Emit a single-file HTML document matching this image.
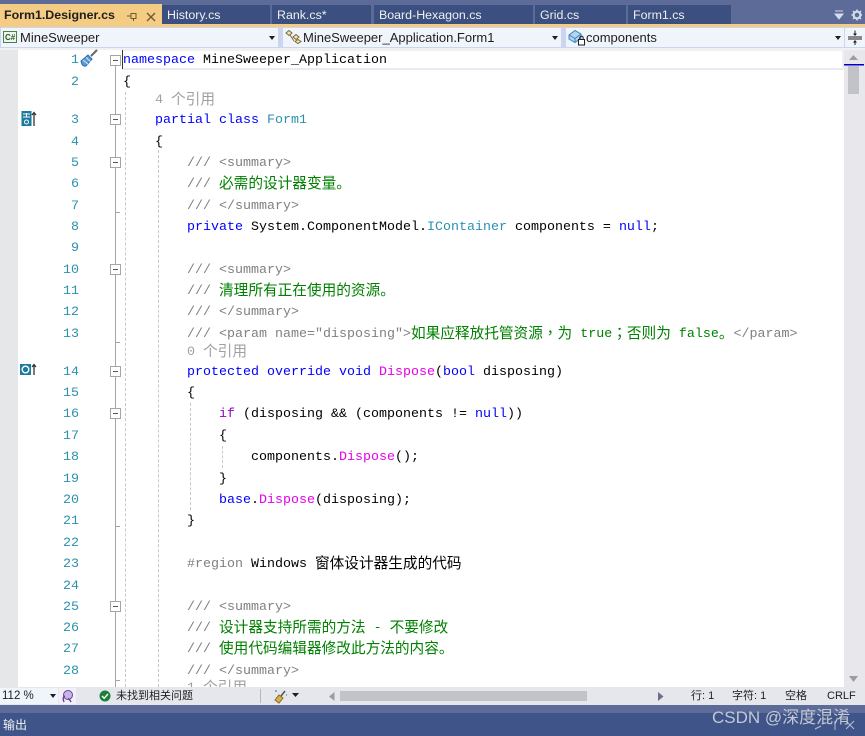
<!DOCTYPE html>
<html><head><meta charset="utf-8">
<style>
html,body{margin:0;padding:0}
body{width:865px;height:736px;position:relative;overflow:hidden;background:#fff;font-family:"Liberation Sans","Noto Sans CJK SC",sans-serif}
.a{position:absolute}
.tab{position:absolute;top:5px;height:19px;background:#3b4f81;color:#f0f0f0;font-size:12.4px;line-height:20px;padding-left:5px;box-sizing:border-box}
.dd{position:absolute;top:28px;height:19px;background:#f0f4fb;font-size:13px;line-height:19px;color:#1e1e1e;box-sizing:border-box}
.dd i{position:absolute;right:3px;top:8px;border-left:3px solid transparent;border-right:3px solid transparent;border-top:4px solid #1e1e1e}
.l{position:absolute;height:20px;line-height:20px;margin-top:2px;white-space:pre;font-family:"Liberation Mono","Noto Sans CJK SC",monospace;font-size:13.33px;color:#000}
.l u{text-decoration:none;font-family:"Noto Sans CJK SC",sans-serif;font-size:14.67px;line-height:0;position:relative;top:1px}
.l u.tc{font-family:"Noto Sans CJK TC",sans-serif}
.n{position:absolute;width:36px;left:43px;margin-top:2px;text-align:right;height:20px;line-height:20px;font-family:"Liberation Mono",monospace;font-size:13.33px;color:#2b91af}
.k{color:#0000ff}.c{color:#008000}.d{color:#808080}.t{color:#2b91af}.m{color:#e800e8}.p{color:#8f08c4}.r{color:#a0a0a0}
.b{position:absolute;left:110px;width:9px;height:9px;border:1px solid #a5a5a5;background:#fff;box-sizing:content-box}
.b:after{content:"";position:absolute;left:2px;top:4px;width:5px;height:1px;background:#555}
.tk{position:absolute;left:115px;width:5px;height:1px;background:#a5a5a5}
.g{position:absolute;width:0;border-left:1px dashed #c8c8c8}
.st{position:absolute;top:688px;height:17px;line-height:17px;font-size:11px;color:#1e1e1e;white-space:nowrap}
</style></head><body>
<div class="a" style="left:0;top:0;width:865px;height:27px;background:#5d6b99"></div>
<div class="a" style="left:0;top:4px;width:162px;height:23px;background:#f5cc84"></div>
<div class="a" style="left:0;top:24px;width:865px;height:3px;background:#f5cc84"></div>
<div class="a" style="left:4px;top:5px;font-size:12.4px;font-weight:bold;line-height:21px;color:#1e1e1e">Form1.Designer.cs</div>
<svg class="a" style="left:126px;top:10px" width="34" height="12" viewBox="0 0 34 12"><path d="M1 6H5M5 3.5V8.5H10V3.5ZM7.5 8.5V11" fill="none" stroke="#6b5a35" stroke-width="1"/><path d="M21 3L29 11M29 3L21 11" stroke="#6b5a35" stroke-width="1.4"/></svg>
<div class="tab" style="left:162px;width:108px">History.cs</div>
<div class="tab" style="left:272px;width:99px">Rank.cs*</div>
<div class="tab" style="left:374px;width:159px">Board-Hexagon.cs</div>
<div class="tab" style="left:535px;width:91px">Grid.cs</div>
<div class="tab" style="left:628px;width:103px">Form1.cs</div>
<svg class="a" style="left:834px;top:9px" width="28" height="12" viewBox="0 0 28 12"><path d="M1 2H9M1 5H9L5 10Z" fill="#d8dce8" stroke="#d8dce8" stroke-width="1"/><circle cx="23" cy="6" r="3.4" fill="none" stroke="#d8dce8" stroke-width="2.2"/><path d="M23 0.5V2M23 10V11.5M17.5 6H19M27 6H28.5M19 2L20 3M26 9L27 10M27 2L26 3M20 9L19 10" stroke="#d8dce8" stroke-width="1.5"/></svg>

<div class="a" style="left:0;top:27px;width:865px;height:23px;background:#ccd5f0"></div>
<div class="a" style="left:0;top:48px;width:865px;height:2px;background:#f1f1f4"></div>
<div class="dd" style="left:1px;width:277px;padding-left:19px">MineSweeper<i></i></div>
<svg class="a" style="left:3px;top:31px" width="14" height="12" viewBox="0 0 14 12"><rect x=".5" y=".5" width="13" height="11" fill="#eef5ee" stroke="#4f7d4f"/><text x="2" y="9" font-family="Liberation Sans" font-size="8" font-weight="bold" fill="#1f5f1f">C#</text></svg>
<div class="dd" style="left:283px;width:278px;padding-left:20px">MineSweeper_Application.Form1<i></i></div>
<svg class="a" style="left:285px;top:29px" width="18" height="16" viewBox="0 0 18 16"><path d="M1 4L4 1.5L7 4L4 6.5ZM8 8L11 5.5L14 8L11 10.5ZM10 12.5L13 10.5L16 12.5L13 14.5Z" fill="#f5e3b5" stroke="#7a6a3e"/><path d="M5 6L9 12" stroke="#7a6a3e"/></svg>
<div class="dd" style="left:566px;width:278px;padding-left:20px">components<i></i></div>
<svg class="a" style="left:568px;top:29px" width="18" height="17" viewBox="0 0 18 17"><path d="M1 6L7 1.5L13 5V9L7 13.5L1 10Z" fill="#b8d4f0" stroke="#3a84c8"/><path d="M1 6L7 9.5L13 5M7 9.5V13.5" fill="none" stroke="#3a84c8"/><rect x="10.5" y="10.5" width="6" height="5.5" fill="#fff" stroke="#1e1e1e"/><path d="M11.8 10.5V8.8A1.7 1.7 0 0 1 15.2 8.8V10.5" fill="none" stroke="#1e1e1e"/></svg>
<svg class="a" style="left:845px;top:28px" width="20" height="19" viewBox="0 0 20 19"><rect width="20" height="19" fill="#f0f4fb"/><path d="M3 9H17M3 11H17" stroke="#1e1e1e"/><path d="M10 2.500V7M10 13V17" stroke="#1e1e1e"/><path d="M8 5.500L10 8L12 5.500ZM8 14.500L10 12L12 14.500Z" fill="#1e1e1e"/></svg>

<!-- editor -->
<div class="a" style="left:0;top:50px;width:18px;height:637px;background:#e6e7e8"></div>
<div class="a" style="left:122px;top:50px;width:722px;height:20px;border-top:1px solid #f0f0f0;border-bottom:2px solid #eaeaf2;border-right:2px solid #f0f0f2;box-sizing:border-box"></div>
<div class="a" style="left:122px;top:50px;width:1px;height:19px;background:#333"></div>
<div class="a" style="left:844px;top:50px;width:21px;height:637px;background:#e8e8ec"></div>
<svg class="a" style="left:844px;top:52px" width="21" height="14" viewBox="0 0 21 14"><path d="M5 8L9.5 3L14 8Z" fill="#9a9ca6"/><rect x="0" y="12" width="20" height="1.5" fill="#0000c8"/></svg>
<div class="a" style="left:848px;top:66px;width:11px;height:28px;background:#c2c3c9"></div>
<svg class="a" style="left:844px;top:674px" width="21" height="10" viewBox="0 0 21 10"><path d="M5 2L9.5 8L14 2Z" fill="#9a9ca6"/></svg>

<!-- outlining -->
<div class="a" style="left:115px;top:66px;width:1px;height:621px;background:#a5a5a5"></div>
<div class="b" style="top:55px"></div><div class="b" style="top:114px"></div><div class="b" style="top:157px"></div><div class="b" style="top:264px"></div><div class="b" style="top:366px"></div><div class="b" style="top:408px"></div><div class="b" style="top:601px"></div>
<div class="tk" style="top:212px"></div><div class="tk" style="top:342px"></div><div class="tk" style="top:526px"></div><div class="tk" style="top:680px"></div>
<div class="g" style="left:125px;top:92px;height:595px"></div>
<div class="g" style="left:158px;top:150px;height:537px"></div>
<div class="g" style="left:190px;top:403px;height:107px"></div>
<div class="g" style="left:222px;top:446px;height:22px"></div>

<!-- line numbers -->
<div class="n" style="top:49px">1</div><div class="n" style="top:71px">2</div><div class="n" style="top:109px">3</div><div class="n" style="top:131px">4</div><div class="n" style="top:152px">5</div><div class="n" style="top:173px">6</div><div class="n" style="top:195px">7</div><div class="n" style="top:216px">8</div><div class="n" style="top:237px">9</div><div class="n" style="top:259px">10</div><div class="n" style="top:280px">11</div><div class="n" style="top:301px">12</div><div class="n" style="top:323px">13</div><div class="n" style="top:361px">14</div><div class="n" style="top:382px">15</div><div class="n" style="top:403px">16</div><div class="n" style="top:425px">17</div><div class="n" style="top:446px">18</div><div class="n" style="top:468px">19</div><div class="n" style="top:489px">20</div><div class="n" style="top:510px">21</div><div class="n" style="top:532px">22</div><div class="n" style="top:553px">23</div><div class="n" style="top:575px">24</div><div class="n" style="top:596px">25</div><div class="n" style="top:617px">26</div><div class="n" style="top:638px">27</div><div class="n" style="top:660px">28</div>

<svg class="a" style="left:79px;top:49px" width="20" height="20" viewBox="0 0 20 20"><path d="M2 12L9 6L13 10L7 17Q3 18 2 12Z" fill="#5b9bd5" stroke="#2e6cab"/><path d="M4 11L10 16M7 8.500L12 13" stroke="#dce9f7"/><path d="M12 7L18 1" stroke="#666" stroke-width="2"/></svg>
<svg class="a" style="left:20px;top:111px" width="18" height="16" viewBox="0 0 18 16"><rect x="1.500" y="0" width="10" height="15" fill="#1c7a9c"/><path d="M3 3H10M6.500 2V6M3 6H10" stroke="#fff"/><circle cx="6.500" cy="11" r="2" fill="none" stroke="#fff"/><path d="M14 15V2M12 4L14 1.500L16 4" fill="none" stroke="#333" stroke-width="1.300"/></svg>
<svg class="a" style="left:20px;top:363px" width="18" height="14" viewBox="0 0 18 14"><rect x="0" y="1" width="11" height="11" fill="#1c7a9c"/><circle cx="5.500" cy="6.500" r="3.300" fill="none" stroke="#fff" stroke-width="1.400"/><path d="M14 12V2M12 4L14 1.500L16 4" fill="none" stroke="#333" stroke-width="1.300"/></svg>

<!-- code -->
<div class="l" style="left:123px;top:49px"><span class="k">namespace</span> MineSweeper_Application</div>
<div class="l" style="left:123px;top:71px">{</div>
<div class="l r" style="left:155px;top:89px">4 <u>个引用</u></div>
<div class="l" style="left:155px;top:109px"><span class="k">partial</span> <span class="k">class</span> <span class="t">Form1</span></div>
<div class="l" style="left:155px;top:131px">{</div>
<div class="l d" style="left:187px;top:152px">/// &lt;summary&gt;</div>
<div class="l" style="left:187px;top:173px"><span class="d">///</span> <u class="c">必需的设计器变量。</u></div>
<div class="l d" style="left:187px;top:195px">/// &lt;/summary&gt;</div>
<div class="l" style="left:187px;top:216px"><span class="k">private</span> System.ComponentModel.<span class="t">IContainer</span> components = <span class="k">null</span>;</div>
<div class="l d" style="left:187px;top:259px">/// &lt;summary&gt;</div>
<div class="l" style="left:187px;top:280px"><span class="d">///</span> <u class="c">清理所有正在使用的资源。</u></div>
<div class="l d" style="left:187px;top:301px">/// &lt;/summary&gt;</div>
<div class="l" style="left:187px;top:323px"><span class="d">/// &lt;param name="disposing"&gt;</span><span class="c"><u>如果应释放托管资源</u><u class="tc">，</u><u>为</u> true<u class="tc">；</u><u>否则为</u> false<u>。</u></span><span class="d">&lt;/param&gt;</span></div>
<div class="l r" style="left:187px;top:341px">0 <u>个引用</u></div>
<div class="l" style="left:187px;top:361px"><span class="k">protected</span> <span class="k">override</span> <span class="k">void</span> <span class="m">Dispose</span>(<span class="k">bool</span> disposing)</div>
<div class="l" style="left:187px;top:382px">{</div>
<div class="l" style="left:219px;top:403px"><span class="p">if</span> (disposing &amp;&amp; (components != <span class="k">null</span>))</div>
<div class="l" style="left:219px;top:425px">{</div>
<div class="l" style="left:251px;top:446px">components.<span class="m">Dispose</span>();</div>
<div class="l" style="left:219px;top:468px">}</div>
<div class="l" style="left:219px;top:489px"><span class="k">base</span>.<span class="m">Dispose</span>(disposing);</div>
<div class="l" style="left:187px;top:510px">}</div>
<div class="l" style="left:187px;top:553px"><span class="d">#region</span> Windows <u>窗体设计器生成的代码</u></div>
<div class="l d" style="left:187px;top:596px">/// &lt;summary&gt;</div>
<div class="l" style="left:187px;top:617px"><span class="d">///</span> <span class="c"><u>设计器支持所需的方法</u> - <u>不要修改</u></span></div>
<div class="l" style="left:187px;top:638px"><span class="d">///</span> <u class="c">使用代码编辑器修改此方法的内容。</u></div>
<div class="l d" style="left:187px;top:660px">/// &lt;/summary&gt;</div>
<div class="l r" style="left:187px;top:677px">1 <u>个引用</u></div>

<!-- status -->
<div class="a" style="left:0;top:687px;width:865px;height:18px;background:#e6e7ed"></div>
<div class="a" style="left:0;top:688px;width:58px;height:16px;background:#f0f4fb;font-size:11.500px;line-height:16px;padding-left:2px;box-sizing:border-box;color:#1e1e1e">112 %</div>
<svg class="a" style="left:50px;top:694px" width="6" height="4"><path d="M0 0H6L3 4Z" fill="#1e1e1e"/></svg>
<svg class="a" style="left:59px;top:688px" width="17" height="16" viewBox="0 0 17 16"><rect width="17" height="16" fill="#f0f0f6"/><circle cx="9" cy="7" r="4.500" fill="#c9b4e6" stroke="#6a3fa0"/><path d="M5 14Q3 9 6 8M12 14Q10 10 9 11" fill="none" stroke="#6a3fa0" stroke-width="1.400"/></svg>
<svg class="a" style="left:99px;top:690px" width="12" height="12" viewBox="0 0 12 12"><circle cx="6" cy="6" r="5.500" fill="#1a7f37"/><path d="M3 6L5.200 8.200L9 4" fill="none" stroke="#fff" stroke-width="1.400"/></svg>
<div class="st" style="left:116px">未找到相关问题</div>
<div class="a" style="left:260px;top:689px;width:1px;height:14px;background:#b8b9c0"></div>
<svg class="a" style="left:274px;top:688px" width="26" height="16" viewBox="0 0 26 16"><path d="M11 3L7 8" stroke="#555" stroke-width="1.500"/><path d="M5 7L9 10L5 15L1 12Z" fill="#d9ae4f" stroke="#8a6a20"/><path d="M1 3H3M12 7H13" stroke="#3a5fc0"/><path d="M18 5H25L21.500 9Z" fill="#1e1e1e"/></svg>
<svg class="a" style="left:329px;top:692px" width="6" height="9"><path d="M5.500 0V9L0 4.500Z" fill="#9a9ca6"/></svg>
<div class="a" style="left:340px;top:691px;width:247px;height:10px;background:#c2c3c9"></div>
<svg class="a" style="left:658px;top:692px" width="6" height="9"><path d="M0 0V9L5.500 4.500Z" fill="#6a6f85"/></svg>
<div class="st" style="left:691px">行: 1</div>
<div class="st" style="left:732px">字符: 1</div>
<div class="st" style="left:785px">空格</div>
<div class="st" style="left:827px">CRLF</div>

<div class="a" style="left:0;top:705px;width:865px;height:8px;background:#5d6b99"></div>
<div class="a" style="left:0;top:713px;width:865px;height:23px;background:#3f5589"></div>
<div class="a" style="left:3px;top:714px;font-size:12px;line-height:22px;color:#f0f0f0">输出</div>
<svg class="a" style="left:812px;top:718px" width="50" height="14" viewBox="0 0 50 14"><path d="M3 11L9 8M23 3V12M34 3L42 11M42 3L34 11" fill="none" stroke="#b8c0d4" stroke-width="1"/></svg>
<div class="a" style="left:712px;top:706px;font-size:17px;line-height:24px;color:#c3c8d4;white-space:nowrap">CSDN @深度混淆</div>
</body></html>
